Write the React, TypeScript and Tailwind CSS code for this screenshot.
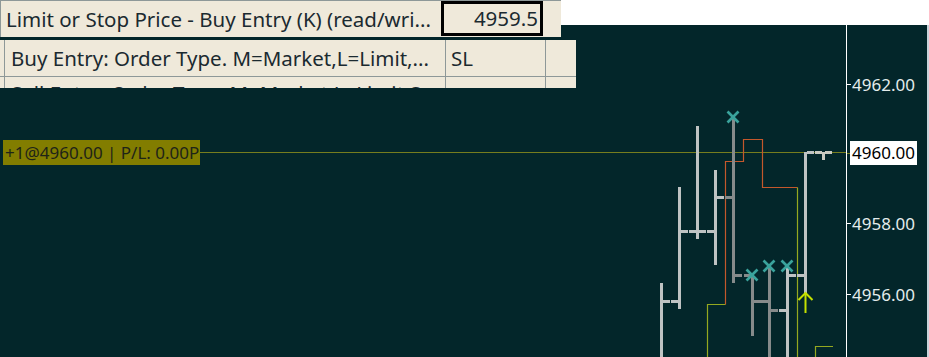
import React from "react";

const LIGHT = "#bfc3c3";
const DARK = "#868b8b";

type Bar = { x: number; hi: number; lo: number; o?: number; c?: number; color: string };

const bars: Bar[] = [
  { x: 661, hi: 283, lo: 360, c: 301, color: LIGHT },
  { x: 679, hi: 187, lo: 309, o: 301, c: 231, color: LIGHT },
  { x: 697, hi: 126, lo: 239, o: 231, c: 231, color: LIGHT },
  { x: 715, hi: 170, lo: 265, o: 231, c: 197, color: LIGHT },
  { x: 733, hi: 117, lo: 283, o: 197, c: 275, color: DARK },
  { x: 752, hi: 275, lo: 336, o: 275, c: 301, color: DARK },
  { x: 769, hi: 266, lo: 360, o: 301, c: 310, color: DARK },
  { x: 787, hi: 266, lo: 360, o: 310, c: 275, color: LIGHT },
  { x: 805, hi: 152, lo: 293, o: 275, c: 152, color: LIGHT },
  { x: 823, hi: 152, lo: 160, o: 152, c: 152, color: "#c9c9c0" },
];

const crosses = [
  [733, 117],
  [752, 275],
  [769, 266],
  [787, 266],
];

function Chart() {
  return (
    <svg width="846" height="332" viewBox="0 25 846 332" className="block">
      {/* position line */}
      <line x1="200" y1="152.5" x2="846" y2="152.5" stroke="#767d1e" strokeWidth="1" />
      {/* stop line */}
      <polyline
        points="707.5,360 707.5,304.5 725.5,304.5"
        fill="none"
        stroke="#94a820"
        strokeWidth="1.2"
      />
      <polyline
        points="725.5,304.5 725.5,161.5 743.5,161.5 743.5,139.5 762.5,139.5 762.5,187.5 797.5,187.5"
        fill="none"
        stroke="#c4582c"
        strokeWidth="1.2"
      />
      <polyline points="797.5,187.5 797.5,360" fill="none" stroke="#94a820" strokeWidth="1.2" />
      <polyline points="815.5,360 815.5,346.5 833,346.5" fill="none" stroke="#94a820" strokeWidth="1.2" />
      {bars.map((b, i) => (
        <g key={i} fill={b.color}>
          <rect x={b.x - 1} y={b.hi} width="3" height={b.lo - b.hi} />
          {b.o !== undefined && <rect x={b.x - 8} y={b.o - 1} width="7" height="3" />}
          {b.c !== undefined && <rect x={b.x + 2} y={b.c - 1} width="7" height="3" />}
        </g>
      ))}
      {crosses.map(([x, y], i) => (
        <g key={i} stroke="#3aa39c" strokeWidth="2.6">
          <line x1={x - 5.5} y1={y - 5.5} x2={x + 5.5} y2={y + 5.5} />
          <line x1={x - 5.5} y1={y + 5.5} x2={x + 5.5} y2={y - 5.5} />
        </g>
      ))}
      {/* arrow */}
      <g stroke="#c4e000" strokeWidth="2" fill="none">
        <line x1="805.5" y1="293" x2="805.5" y2="313" />
        <polyline points="798.5,300 805.5,293 812.5,300" />
      </g>
    </svg>
  );
}

const priceLabels = [
  { y: 84, t: "4962.00" },
  { y: 223, t: "4958.00" },
  { y: 294, t: "4956.00" },
];

export default function App() {
  const font = { fontFamily: '"Noto Sans", "Open Sans", sans-serif' };
  return (
    <div className="relative w-[929px] h-[357px] overflow-hidden bg-white" style={font}>
      <div className="h-[25px] bg-white" />
      <div className="flex h-[332px] bg-[#03262a]">
        <div className="relative w-[846px] h-full">
          <Chart />
          <div className="absolute left-[3px] top-[115px] h-[25px] bg-[#827d00] text-[#1e2418] text-[17px] leading-[25px] pl-[2px] pr-[1px] whitespace-nowrap">
            +1@4960.00 | P/L: 0.00P
          </div>
        </div>
        <div className="relative w-[83px] h-full border-l border-white border-r-2 border-r-[#c9d3da]">
          {priceLabels.map((p) => (
            <div
              key={p.t}
              className="absolute left-0 flex items-center h-[24px]"
              style={{ top: p.y - 25 - 12 }}
            >
              <div className="w-[4px] h-px bg-white" />
              <span className="ml-[1px] text-[17px] text-[#e4ecec] leading-none">{p.t}</span>
            </div>
          ))}
          <div className="absolute left-0 top-[116px] flex items-center h-[24px]">
            <div className="w-[3px] h-px bg-[#767d1e]" />
            <span className="ml-0 bg-white text-black text-[17px] leading-[24px] px-[2px]">4960.00</span>
          </div>
        </div>
      </div>

      {/* data table overlay */}
      <div className="absolute left-0 top-0 text-[#1b2a30] text-[20.5px]">
        <div className="flex h-[37px] w-[561px] bg-[#efe9da] border-t border-l border-[#8e9898]">
          <div className="w-[440px] pl-[5px] flex items-center whitespace-nowrap overflow-hidden">
            Limit or Stop Price - Buy Entry (K) (read/wri...
          </div>
          <div className="w-[102px] h-[35px] border-[3px] border-black flex items-center justify-end pr-[2px]">
            4959.5
          </div>
        </div>
        <div className="h-[3px]" />
        <div className="flex h-[37px] w-[576px] bg-[#efe9da] border-b border-[#8e9898] pl-[4px]">
          <div className="w-[441px] border-l border-[#8e9898] pl-[6px] flex items-center whitespace-nowrap overflow-hidden">
            Buy Entry: Order Type. M=Market,L=Limit,...
          </div>
          <div className="w-[100px] border-l border-[#8e9898] pl-[5px] flex items-center">SL</div>
          <div className="flex-1 border-l border-[#8e9898]" />
        </div>
        <div className="flex h-[11px] w-[576px] bg-[#efe9da] pl-[4px] overflow-hidden">
          <div className="w-[441px] border-l border-[#8e9898] pl-[6px] whitespace-nowrap leading-[20px] pt-[6px] overflow-hidden">
            Sell Entry: Order Type. M=Market,L=Limit,S...
          </div>
          <div className="w-[100px] border-l border-[#8e9898]" />
          <div className="flex-1 border-l border-[#8e9898]" />
        </div>
      </div>
    </div>
  );
}
